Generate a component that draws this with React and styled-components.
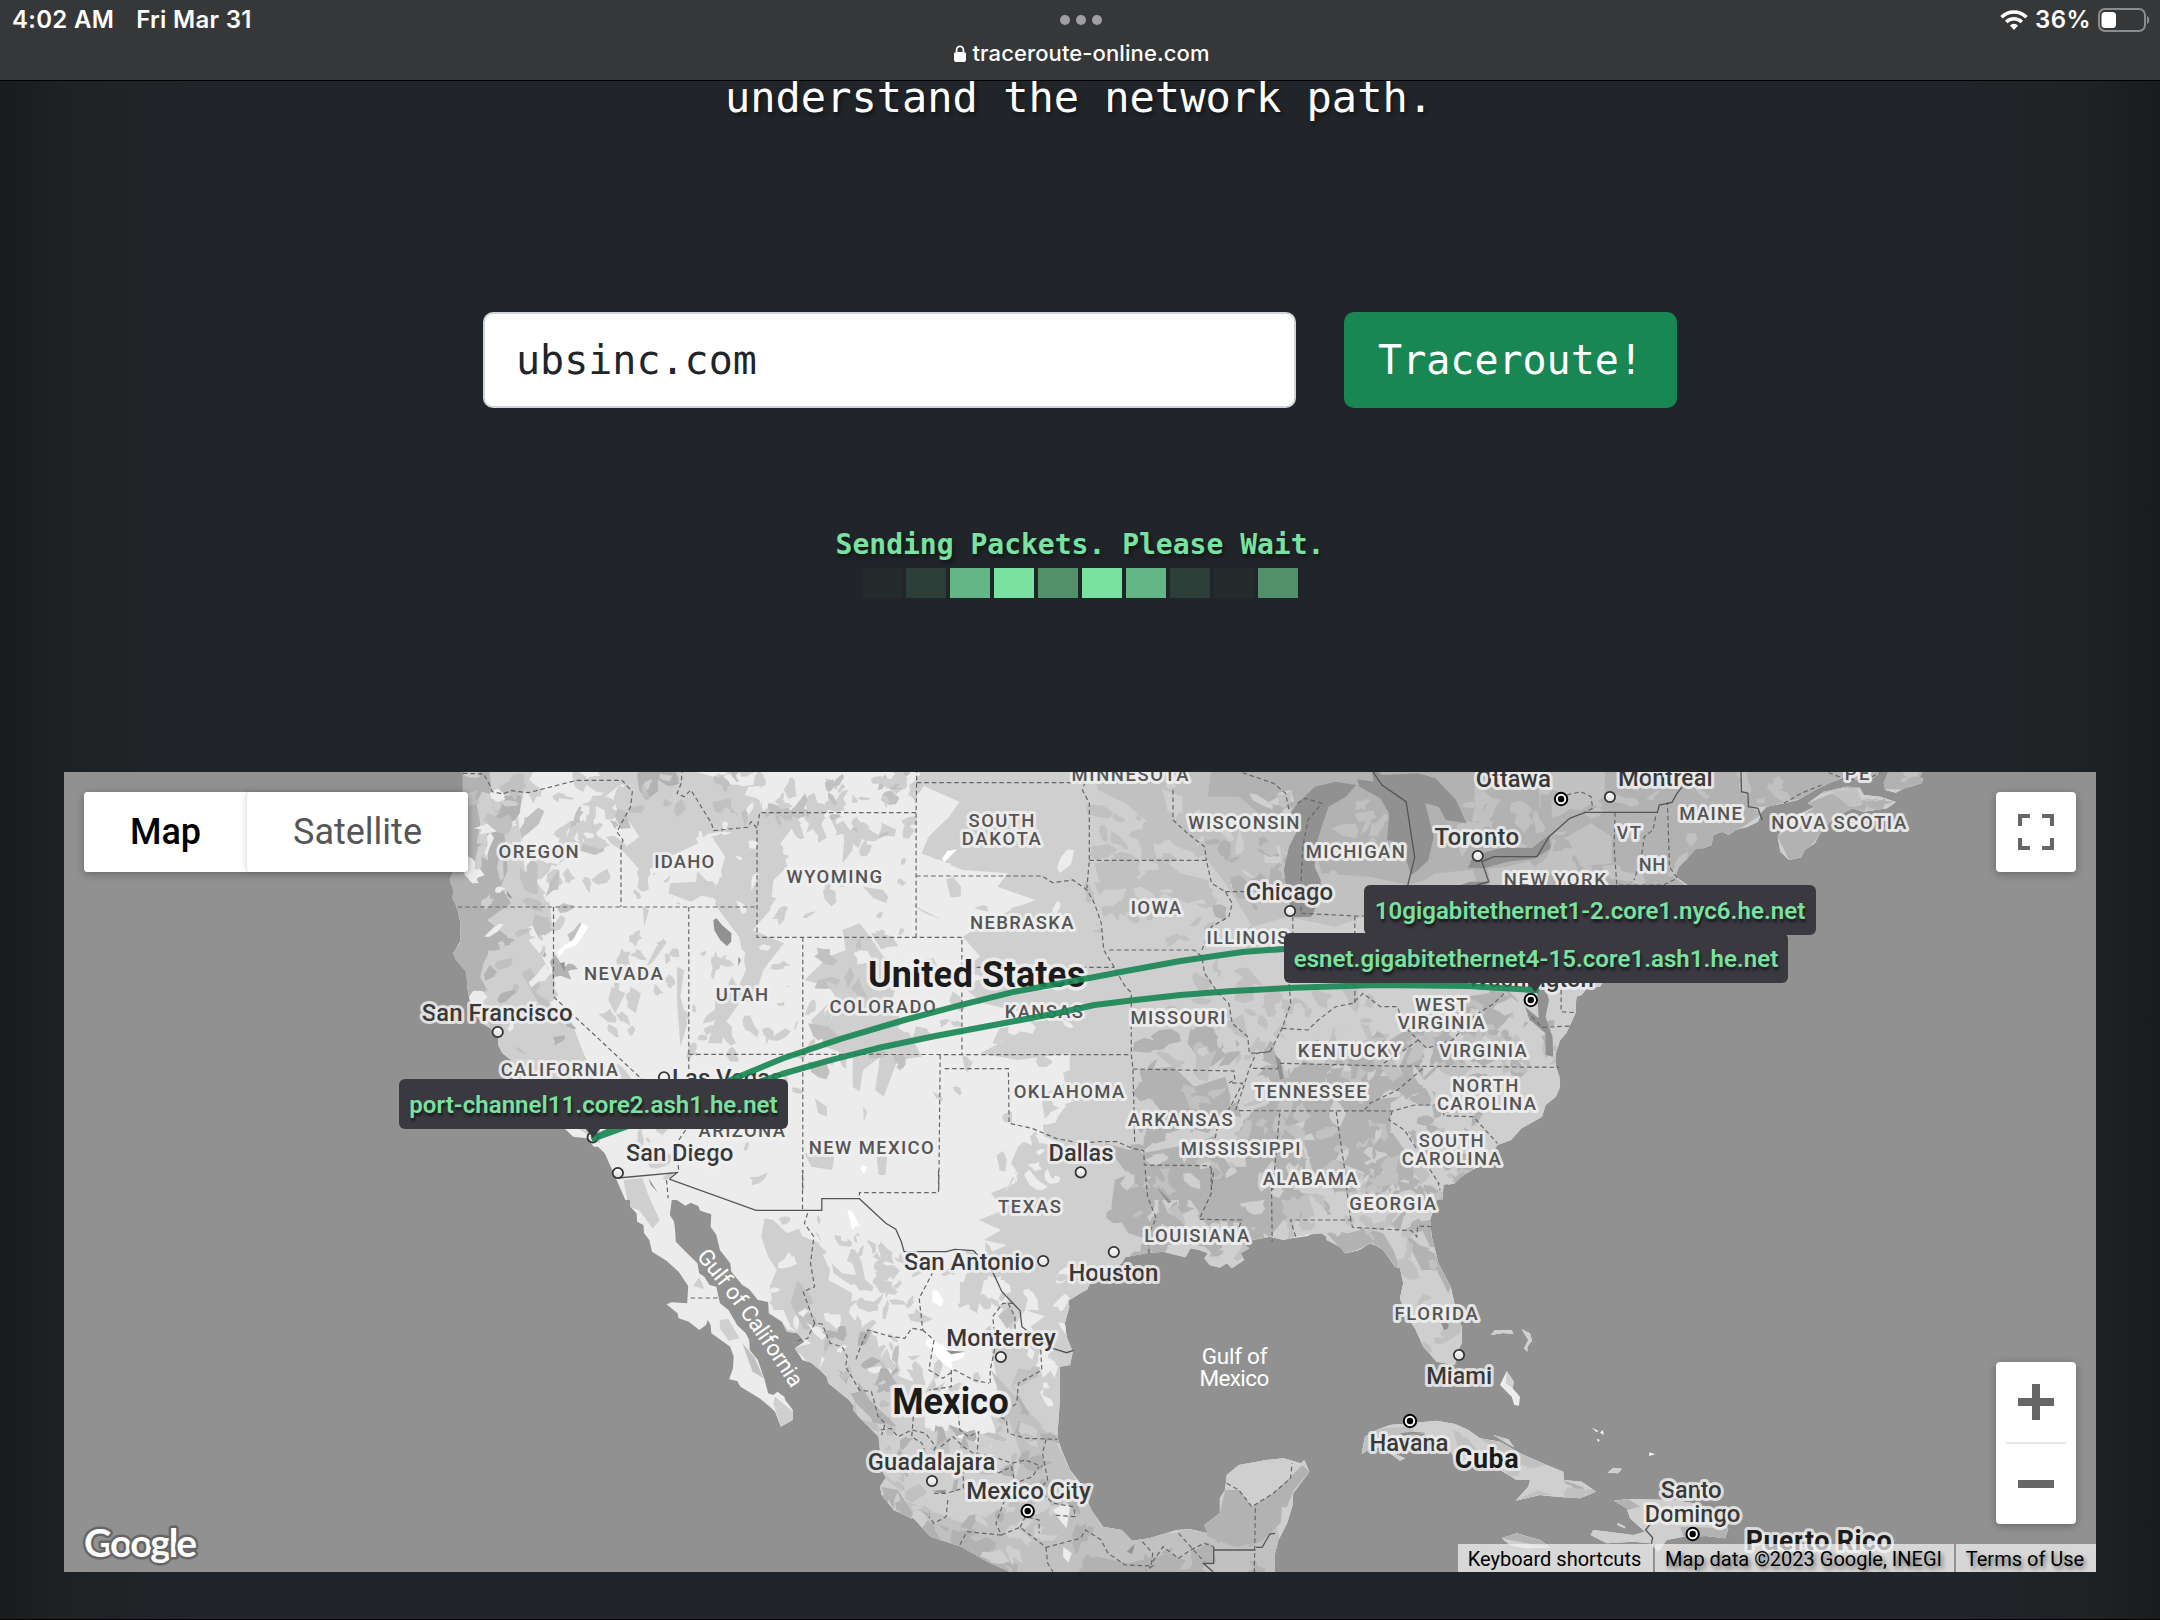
import React from "react";
import styled, { createGlobalStyle, css } from "styled-components";

/* ---------- map geometry ---------- */

// Each sheet is a patch of the map: [left, top, x scale, y scale].
const S = 540 / 1568;
const sheets = {
  A: [60, 770, S, 1 / 3],
  B: [560, 770, S, 1 / 3],
  C: [1060, 770, S, 1 / 3],
  D: [1560, 770, S, 1 / 3],
  E: [360, 1170, S, 1 / 3],
  F: [860, 1170, S, 1 / 3],
  G: [1340, 1170, 1 / 3, 1 / 3],
};

const at = (sheet, x, y) => {
  const [l, t, sx, sy] = sheets[sheet];
  return [l + x * sx, t + y * sy];
};

// "A 10,20 30,40 B 5,6" -> path data; a letter switches the sheet
const trace = (text, closed) => {
  let sheet = "A";
  const pts = [];
  text.trim().split(/\s+/).forEach((tok) => {
    if (sheets[tok]) sheet = tok;
    else {
      const [x, y] = tok.split(",").map(Number);
      pts.push(at(sheet, x, y).map((v) => v.toFixed(1)).join(" "));
    }
  });
  return "M" + pts.join("L") + (closed ? "Z" : "");
};

const land = [
  "A 1170,-10 1170,60 1165,130 1180,200 1140,310 1132,330 1142,360 1140,385 1150,405 1157,430 1163,460 1162,515 1142,550 1150,570 1180,605 1183,655 1190,690 1205,730 1225,760 1250,775 1272,800 1272,825 1285,850 1310,870 1300,900 1320,930 1350,1000 1420,1050 1470,1080 1490,1100 1530,1105 1550,1130 B 110,1130 130,1150 160,1190 168,1225 190,1270 900,1280 900,-10",
  "B 100,-10 1600,-10 1600,1290 190,1290 130,1150 100,1000",
  "C -20,-10 1600,-10 1600,600 1568,650 1530,655 1515,675 1500,680 1498,700 1497,730 1470,790 1452,810 1440,850 1440,890 1450,920 1452,950 1440,980 1410,1005 1400,1040 1340,1075 1310,1110 1270,1125 1240,1175 1180,1210 1130,1245 1115,1225 1110,1290 -20,1290",
  "D -30,-10 527,-10 547,70 547,110 575,120 585,130 575,155 545,170 510,180 490,195 470,185 445,195 440,225 415,235 395,235 370,265 345,290 335,320 370,345 300,420 -30,420",
  "D 520,-10 800,-10 820,25 790,35 740,60 690,90 650,100 600,110 585,127 547,112 527,65",
  "D 960,-10 1060,-10 1045,20 1055,28 1050,40 1000,55 975,68 945,60 940,40",
  "D 765,65 790,60 830,50 870,52 882,75 930,80 975,96 950,115 880,125 850,115 800,140 760,180 740,220 710,240 700,262 665,270 640,245 632,200 650,170 680,140 740,110 720,100",
  "D 790,8 830,28 900,30 930,8",
  "E 745,-20 750,20 770,55 785,80 785,110 803,130 805,155 823,165 825,190 840,210 848,245 890,272 925,305 953,348 950,400 905,397 890,403 922,430 925,445 955,455 985,480 1005,465 1010,450 1018,465 1020,490 1055,515 1075,530 1085,560 1083,595 1072,628 1095,633 1105,650 1160,685 1190,710 1205,725 1222,770 1257,750 1257,720 1235,690 1232,680 1212,665 1200,675 1185,670 1175,630 1155,570 1132,540 1130,510 1120,490 1095,465 1070,420 1045,400 1035,350 1015,345 1000,320 985,310 980,280 950,250 917,215 915,180 912,155 900,135 905,90 920,90 945,107 960,98 982,108 988,122 1020,133 1018,170 1035,195 1045,240 1075,280 1078,305 1110,345 1130,358 1155,390 1185,395 1187,430 1225,455 1240,485 1270,490 1290,515 1262,535 1285,570 1310,578 1335,600 1355,620 1360,640 1420,690 1450,730 1505,790 1510,840 1480,890 1535,910 1510,950 1515,975 1550,1020 1600,1045 1640,1040 1640,-20",
  "F -20,-20 -20,720 0,745 55,800 60,840 50,880 80,930 58,950 75,990 100,1020 155,1045 205,1100 295,1130 370,1175 430,1203 480,1260 1205,1260 1205,1150 1215,1110 1240,1060 1255,1010 1258,970 1305,905 1290,870 1280,880 1230,865 1180,870 1100,885 1065,915 1060,960 1045,985 1045,1030 1000,1065 1010,1090 960,1078 920,1080 840,1105 790,1112 760,1080 705,1070 672,1020 655,980 640,940 610,900 585,840 573,800 580,700 580,590 610,585 618,545 600,500 595,460 608,410 605,392 660,358 668,340 760,280 770,262 830,250 880,245 945,262 960,235 985,240 1010,250 1000,265 1015,285 1045,293 1065,280 1080,295 1115,270 1105,250 1130,235 1110,220 1140,210 1190,200 1230,210 1290,195 1340,190 1385,220 1410,250 1450,240 1480,220 1530,235 1560,290 1640,290 1640,-20",
  "G -40,-30 -40,210 0,230 15,250 50,240 95,218 130,240 165,290 180,295 190,340 180,385 200,440 225,475 250,530 290,575 345,585 352,545 365,520 365,470 350,430 332,350 295,280 275,200 270,150 290,90 310,65 295,45 345,40 380,0 390,-30",
  "G 65,852 75,800 110,780 150,765 210,760 290,752 345,762 385,780 420,805 480,815 540,850 620,885 670,905 672,930 725,935 768,965 720,985 650,980 600,975 527,992 565,950 570,930 530,930 480,900 430,890 350,880 330,840 250,790 200,795 160,850 195,865 180,872 150,850 130,830 85,840",
  "G 822,992 865,987 1000,990 1060,1000 1110,1050 1165,1075 1155,1105 1100,1098 1030,1100 980,1110 955,1145 930,1120 880,1115 800,1120 752,1095 760,1080 880,1095 915,1085 870,1045 860,1015",
  "G 485,1105 530,1090 600,1110 630,1132 560,1135 510,1125",
  "G 803,908 820,893 846,896 835,910",
  "G 500,603 522,635 518,655 540,680 537,707 523,705 515,680 480,645",
  "G 452,495 465,480 515,480 520,492 490,489",
  "G 545,478 570,490 576,512 562,530 562,545 552,535 565,510",
  "G 460,795 505,808 523,832 510,826",
  "G 833,1058 856,1070 855,1075 833,1066",
];

const shades = {
  dark: "#b2b2b2",
  mid: "#c1c1c1",
  soft: "#cfcfcf",
  pale: "#ececec",
  snow: "#ffffff",
  water: "#919191",
};

const areas = [
  // plains, the gulf states and the seaboard
  ["soft", "B 1036,-10 1060,50 1160,95 1130,140 1070,200 1050,250 1110,275 1170,300 1300,310 1270,350 1380,390 1330,410 1290,430 1200,480 1170,500 1220,560 1180,590 1130,620 1230,700 1310,720 1360,730 1330,790 1220,850 1330,870 1480,850 1480,900 1410,930 1400,1000 1410,1060 1330,1130 1310,1180 1330,1210 1290,1270 F 455,0 450,40 380,70 420,120 345,150 410,180 360,210 425,225 290,290 290,400 340,430 360,330 420,330 430,400 400,440 440,480 480,420 540,440 530,470 380,530 400,640 380,740 400,800 360,900 480,950 1640,1230 1640,280 G 1200,1200 1200,-40 D 1100,-10"],
  ["soft", "G -60,-40 400,-40 400,600 100,600 -60,300"],
  ["soft", "G 40,740 1200,740 1200,1180 40,1180"],
  ["soft", "G 430,470 590,470 590,560 430,560"],
  ["soft", "A 1160,-10 1380,-10 1350,60 1330,140 1350,300 1420,380 1430,480 1360,510 1400,560 1440,640 1420,700 1480,740 1520,850 1568,950 1568,1120 1300,930 1200,730 1130,560 1120,300"],
  ["soft", "B 100,-10 340,-10 480,30 560,60 600,90 700,140 640,220 660,290 620,330 610,420 560,480 650,520 590,600 560,700 500,690 540,600 520,500 440,390 480,260 440,200 320,260 240,310 180,240 230,200 180,120"],
  ["soft", "B 820,480 870,460 900,500 940,560 1000,580 960,700 1020,800 1050,860 980,870 940,980 915,960 930,860 880,900 870,965 850,950 850,860 740,820 730,750 800,680 780,650 710,630 780,560 830,540"],
  ["soft", "E 1175,145 1200,150 1240,190 1290,170 1330,190 1350,240 1370,270 1360,330 1430,370 1420,430 1460,480 1500,500 1520,600 1640,650 1640,1060 1480,900 1360,640 1262,535 1310,520 1250,470 1230,420 1200,420 1190,350 1210,300 1185,260 1165,200"],
  ["soft", "F -20,600 60,660 200,780 380,830 420,760 560,760 640,1000 1250,850 1300,1260 400,1260 40,1000"],
  // north and the uplands of the south
  ["mid", "C 90,-10 1600,-10 1600,620 1300,650 1100,500 880,440 800,470 660,440 560,470 480,340 420,260 340,230 190,100 110,60"],
  ["mid", "C 100,280 180,260 230,330 290,260 350,310 430,330 440,380 370,400 300,370 260,420 170,430 130,390"],
  ["dark", "C 440,-10 1600,-10 1600,60 1500,180 1440,250 1300,290 1090,310 1060,330 1010,345 900,320 760,310 700,100 600,150 520,80 430,80"],
  ["dark", "C 380,770 450,750 490,790 530,830 490,850 440,890 400,860 370,820"],
  ["dark", "C 230,900 330,890 390,950 480,920 500,1000 430,1090 330,1060 240,1080 250,980"],
  ["dark", "C 640,900 880,860 1020,770 1180,680 1300,660 1340,700 1280,770 1140,850 1060,930 960,1000 960,1080 1040,1200 900,1290 560,1290 540,1180 520,1060 620,990"],
  ["dark", "C 130,1120 240,1150 440,1110 500,1200 440,1290 250,1290"],
  ["dark", "F 740,30 830,-10 1560,-10 1560,60 1400,130 1230,150 1190,200 1120,160 1000,150 960,90 880,20 830,130 870,220 780,190 730,110"],
  ["dark", "D -60,-10 527,-10 547,110 590,130 430,240 330,320 370,350 300,400 -60,400 -60,120 60,60"],
  ["dark", "D 520,-10 1060,-10 1060,60 820,55 600,110 540,110"],
  ["dark", "D 632,200 740,110 720,100 790,70 850,110 930,90 970,96 800,140 700,262 665,270"],
  ["dark", "G -40,190 60,170 130,190 160,240 180,292 165,290 130,240 95,218 50,240 15,250"],
  ["dark", "G 180,160 275,150 275,200 298,280 332,350 325,370 290,300 245,300 220,250 200,200"],
  ["mid", "D -60,-10 130,-10 130,80 60,120 -60,110"],
  ["dark", "A 1165,-10 1245,-10 1255,80 1340,75 1335,130 1290,190 1300,300 1280,350 1310,400 1240,450 1300,500 1240,540 1220,620 1240,660 1190,690 1120,560 1120,300"],
  ["soft", "A 1210,100 1225,65 1280,80 1275,130 1240,160 1240,225 1210,220 1220,160"],
  ["mid", "A 1340,610 1365,595 1420,690 1435,760 1390,700"],
  ["dark", "B 220,-10 330,-10 350,40 290,60 250,90 230,60"],
  ["mid", "B 720,760 780,770 810,800 770,830 740,810"],
  ["mid", "F 380,600 560,800 620,920 700,1070 900,1090 1210,1070 1250,1260 400,1260 200,1100 60,960 100,980 300,1060 430,1010 470,860"],
  ["dark", "F 440,640 490,730 470,800 450,790 470,720"],
  ["dark", "F 60,950 110,960 160,1040 300,1090 400,1160 440,1210 370,1175 205,1100 100,1020"],
  ["dark", "F 640,1150 780,1180 900,1150 1000,1200 1000,1260 640,1260"],
  ["dark", "F 1060,960 1045,1030 1000,1065 1010,1100 1090,1130 1150,1130 1220,1060 1260,960 1305,905 1285,885 1250,920 1200,970 1138,1010 1100,960"],
  ["mid", "E 1270,330 1310,380 1330,470 1290,480 1250,400"],
  ["dark", "E 1390,600 1450,640 1480,690 1560,770 1500,760 1440,700"],
  ["mid", "G 65,852 75,800 130,775 200,770 230,790 150,830"],
  ["mid", "G 340,780 370,790 420,850 360,860"],
  ["mid", "G 420,805 480,815 620,885 570,895 500,860"],
  ["dark", "G 670,930 768,965 745,972 690,960"],
  ["mid", "G 527,992 590,960 640,975 600,975"],
  ["dark", "G 1020,1070 1165,1075 1155,1105 1030,1100"],
  ["dark", "G 822,992 865,987 900,1010 860,1020"],
  ["dark", "G 485,1105 530,1090 600,1110 630,1132 560,1120"],
];

const details = [
  ["soft", "E 765,30 820,25 835,70 870,150 850,175 810,120 780,110"],
  ["soft", "E 985,322 1000,357 967,348"],
  ["soft", "E 1045,450 1070,447 1102,505 1070,512 1045,475"],
  ["mid", "E 1110,520 1145,560 1172,625 1140,605"],
  ["soft", "E 1205,680 1257,725 1257,750 1222,770 1200,700"],
  ["soft", "E 1425,255 1455,270 1468,335 1425,345 1375,310 1370,280 1400,310 1440,315"],
  ["snow", "E 1415,120 1428,122 1452,170 1438,168 1430,180"],
  ["soft", "B 740,985 775,1010 775,1040 750,1030"],
  ["soft", "B 880,1010 892,1025 882,1055"],
  ["soft", "B 450,660 500,640 520,700 480,760 470,820 430,820 450,750"],
  ["soft", "B 300,505 308,520 270,575 250,590 280,530"],
  ["soft", "B 240,410 258,420 245,470"],
  ["soft", "B 320,340 390,335 440,360 380,395 315,370"],
  ["soft", "B 340,590 360,600 350,680 370,760 350,830 340,700"],
  ["soft", "B 150,650 190,670 160,730 140,690"],
  ["soft", "B 205,650 235,670 220,730 195,710"],
  ["soft", "B 880,350 940,360 950,400 910,385"],
  ["soft", "B 820,150 850,190 850,240 820,280 825,210"],
  ["soft", "B 710,1150 800,1140 790,1200 730,1190"],
  ["soft", "B 920,1160 950,1160 945,1215 925,1215"],
  ["soft", "B 1015,400 1110,450 1060,430"],
  ["pale", "C 0,860 15,940 -60,980 -90,930"],
  ["snow", "A 1515,460 1535,470 1500,525 1465,540 1450,560 1443,545 1465,525 1490,510"],
  ["snow", "B 1125,243 1153,238 1115,278 1110,265"],
  ["snow", "B 878,1185 893,1192 882,1212 873,1198"],
  ["snow", "F 210,360 225,362 243,390 235,410 210,395"],
  ["snow", "F 200,495 225,520 305,550 300,565 265,575 270,600 240,580 190,520"],
  ["snow", "A 1152,530 1160,505 1162,518"],
  ["pale", "F 595,1000 610,1010 600,1075 580,1050 560,1020"],
  ["pale", "F 590,1130 615,1150 605,1178 590,1160"],
  ["pale", "F 550,560 575,590 565,625 550,595"],
  ["pale", "F 490,530 508,545 500,570 485,555"],
  ["soft", "F 1225,1010 1245,1015 1240,1080 1220,1090"],
  ["soft", "F 1090,900 1160,890 1200,900 1160,920 1120,910"],
  ["pale", "E 1340,560 1350,565 1335,595"],
  ["soft", "G 500,603 522,635 520,655 497,640"],
  ["mid", "G 300,490 330,450 365,460 360,490 320,515"],
  ["water", "G 303,458 325,460 325,475 312,480"],
  ["water", "G 180,790 215,785 255,788 245,797 190,797"],
  ["mid", "D 370,190 395,190 398,210 380,230 365,210"],
  ["mid", "D 790,65 860,55 880,100 840,110"],
  ["mid", "D 20,200 90,160 150,200 150,280 60,290"],
  ["soft", "C 1440,700 1495,690 1494,740 1450,800 1430,830"],
  // lakes, bays
  ["water", "C 700,90 740,50 800,35 860,45 830,80 780,110 760,170 740,235 740,290 757,330 757,380 730,440 680,442 660,380 650,300 665,230 690,180 668,130 690,100"],
  ["water", "C 862,28 910,35 905,-10 935,15 1040,10 1090,25 1150,90 1180,160 1120,150 1100,110 1060,100 1085,200 1070,270 1040,300 1020,315 1005,270 1010,225 950,210 955,130 930,85 870,50"],
  ["water", "C 1185,293 1195,268 1240,245 1290,232 1370,235 1420,195 1425,235 1380,265 1300,275 1230,295"],
  ["water", "C 1150,350 1190,335 1245,335 1225,360"],
  ["water", "B 445,450 455,445 470,465 498,490 497,515 485,528 465,510 448,480"],
  ["water", "B 518,560 525,570 518,588"],
  ["water", "C 1385,660 1405,640 1420,690 1410,740 1430,800 1432,860 1410,855 1410,790 1365,750 1350,710 1390,745"],
  ["water", "C 625,855 640,870 650,925 638,930"],
  ["water", "E 838,25 865,68 845,45"],
  ["water", "A 1298,362 1315,388 1300,378"],
  ["water", "A 1452,580 1465,576 1466,605"],
  ["water", "F 210,962 250,960 245,972"],
  ["water", "F 775,1145 798,1122 790,1152"],
  ["water", "F 860,50 905,95 895,100"],
  ["water", "F 250,541 305,545 265,553"],
  ["water", "F 622,385 640,370 662,362 640,385"],
  ["water", "C 1240,100 1225,130 1235,105"],
];

const specks = [
  "G 755,773 775,782 770,787",
  "G 780,788 788,780 792,795",
  "G 770,806 780,810 774,816",
  "G 928,847 946,853 927,858",
  "F 1245,205 1310,192 1300,198 1265,203",
];

const stateLines = [
  "A 1170,10 1230,12 1248,45 1255,65 1285,72 1310,62 1360,68 1500,31 B 180,31 210,65 205,110 165,185 183,210 177,230 177,410",
  "A 1155,411 B 572,411",
  "A 1433,411 1433,680 B 240,930",
  "B 374,411 374,900",
  "B 355,-5 352,40 340,70 360,80 380,60 410,110 440,160 446,182 545,172 555,155 573,175 580,128 1034,128",
  "B 572,180 572,502 1167,502 1167,855",
  "B 1036,-5 1034,128 1034,502",
  "B 1036,38 1530,38",
  "B 1034,318 1400,318 1430,338 1490,330 1530,360 C 100,400 120,460 127,540 158,592 175,625 190,650 207,668 207,853 212,897 217,1120",
  "C 80,15 65,60 85,100 85,270 78,355",
  "B 705,502 705,1260 E 1285,0 1285,121",
  "B 374,853 C 207,854",
  "B 1210,592 C 158,592",
  "B 1104,855 1100,1260 F 228,0 228,68 0,68 E 1450,68 1450,84",
  "B 1117,896 1302,896 1304,1060 1370,1075 1440,1105 C 60,1120 110,1115 165,1115 210,1135 243,1142 245,1185 435,1187 445,1210 440,1260",
  "B 365,1080 345,1110 340,1140 345,1205",
  "C 143,540 390,540 412,560 420,610 460,670 490,700 500,760 545,800 550,850 610,845",
  "C 212,897 505,903 508,930 490,938 530,940 500,1000 455,1080 450,1110",
  "C 85,271 425,271 440,340 480,365 500,400 490,440 440,470 412,540",
  "C 328,60 328,150 370,190 420,230 425,271",
  "C 480,365 590,365",
  "C 530,8 620,40 655,70 665,120",
  "C 690,100 710,85 760,100 720,150 705,230 700,330 700,430 860,438 885,438",
  "C 676,440 676,530 665,640 670,700 645,775 610,845 570,850 550,895 530,960 510,1020",
  "C 856,438 856,700",
  "C 645,775 720,780 750,750 800,710 850,700 880,670 930,710 980,710 1000,770 1040,810 1065,835 1140,810 1200,740 1260,700 1290,670",
  "C 560,895 630,897 640,880 950,888 1450,892",
  "C 520,1022 965,1023 1030,1005 1110,1005 1115,1037 1200,1040 1270,1120",
  "C 885,1020 900,1000 980,960 1060,890",
  "C 940,880 1000,840 1040,810",
  "C 638,1030 618,1260",
  "C 802,1025 828,1210 F 1415,70 1425,150",
  "C 965,1023 955,1050 1000,1080 1050,1160 1100,1240 G 295,40 300,60",
  "C 1370,740 1400,772 1490,768",
  "C 1455,660 1455,725 1500,728",
  "D 160,127 157,230 165,345 300,345 340,325 318,290 312,97",
  "D 278,140 270,180 245,200 235,270 215,330",
  "D 20,75 60,65 90,80 95,115 73,127",
  "D 650,100 700,70 760,45",
  "D 780,8 830,28 890,28 930,8",
  "F 828,0 835,80 860,145 835,200 840,255",
  "F 1020,0 1020,70 985,148 1108,150 1100,175",
  "F 1195,50 1197,215",
  "F 1265,200 1250,150 1425,150 1430,172 1568,180 G 215,182 230,200 233,168 280,170",
  "E 1300,130 1290,160 1318,200 1308,280 1320,350 1287,365 1320,460 1342,462 1365,520 1400,530 1415,560 1410,590 1450,660 1485,665 1505,740 1525,760 1515,795",
  "E 1320,460 1300,505 1272,512",
  "E 1440,568 1450,540 1475,480 F 90,500 130,505 150,475 182,480 172,385 210,310",
  "E 960,384 1040,384",
  "E 890,30 895,85",
  "F 182,480 215,510 200,600 240,625 275,600 330,630 375,640",
  "F 265,600 265,650 200,660",
  "F 445,400 415,400 385,440 395,520 378,600 378,640",
  "F 430,400 450,440 450,490",
  "F 525,540 528,600 460,640 455,700 405,740 425,750 430,790 480,805 573,808",
  "F 285,730 290,780 315,800 345,785 340,850",
  "F 60,780 90,775 110,800 150,780 190,790 220,830 210,850",
  "F 155,740 150,800 180,820 190,850",
  "F 235,830 270,800 300,830 330,850 390,860 440,880 480,870 530,890",
  "F 540,808 530,850 545,930 520,960 560,1000 620,1010 625,1040 560,1035",
  "F 255,990 250,1040 215,1060 200,1040",
  "F 215,970 250,970 300,955 300,900",
  "F 420,990 395,1060 410,1095 310,1085 290,1125",
  "F 410,1095 465,1072 540,1132 640,1105 655,1080 700,1110 720,1150 770,1185 850,1188 830,1200",
  "F 540,1132 545,1180 560,1205",
  "F 465,1072 480,1040 520,1050 520,1090",
  "F 820,1115 850,1150 845,1190",
  "F 850,1175 880,1130 925,1165 960,1140 1000,1120 1027,1130",
  "F 925,1090 960,1130 1000,1175",
  "F 400,910 440,890 450,940 500,920 520,890",
  "F 1065,940 1100,960 1138,1010 1200,970 1250,925 1255,880",
  "F 1148,1015 1145,1210",
];

const countryLines = [
  "B 168,1224 340,1208 320,1225 E 900,28 1150,121 1341,121 1341,86 1450,86 F 75,160 104,178 120,215 128,245 250,245 275,238 330,242 385,305 412,365 465,422 470,470 520,510 560,535 600,548 620,541",
  "C 905,0 935,45 1005,95 1030,262 1010,345",
  "C 1210,345 1245,335 1225,275 1260,260 1385,260 1420,200 1480,145 1525,127 D 73,127 283,127 288,105 325,97 340,70 355,50",
  "D 525,-5 527,65 546,70 547,110 575,115 587,150",
  "F 1027,1130 1027,1180 997,1180 1025,1205",
  "F 1027,1140 1148,1140",
  "F 1150,1132 1168,1132 1190,1092 1205,1090",
  "G 932,1060 917,1080 938,1103 934,1122",
];

// [sheet, left, top, right, bottom, count, size, shades]
const relief = [
  ["A", 1160, 0, 1568, 400, 50, 9, ["soft", "pale", "soft", "mid"]],
  ["A", 1180, 400, 1500, 1100, 50, 8, ["soft", "dark", "mid", "pale"]],
  ["B", 0, 0, 1035, 200, 140, 9, ["soft", "soft", "pale", "mid", "soft"]],
  ["B", 0, 200, 640, 420, 30, 8, ["soft", "pale"]],
  ["B", 560, 150, 1035, 500, 22, 7, ["soft"]],
  ["B", 130, 500, 420, 820, 20, 6, ["soft"]],
  ["B", 380, 500, 720, 850, 28, 8, ["soft", "soft", "pale"]],
  ["B", 720, 500, 1040, 900, 36, 8, ["soft", "mid", "pale"]],
  ["B", 150, 850, 700, 1240, 20, 8, ["soft"]],
  ["B", 1040, 250, 1480, 980, 34, 8, ["soft", "soft", "pale"]],
  ["B", 1280, 950, 1450, 1250, 14, 9, ["pale", "soft"]],
  ["C", 80, 30, 440, 480, 55, 10, ["soft", "mid", "mid"]],
  ["C", 440, 80, 700, 440, 38, 9, ["soft", "dark", "mid"]],
  ["C", 760, 100, 1010, 330, 12, 8, ["mid"]],
  ["C", 1080, 60, 1560, 340, 26, 12, ["mid", "mid", "dark"]],
  ["C", 280, 500, 900, 860, 64, 9, ["soft", "mid", "mid"]],
  ["C", 220, 760, 640, 1240, 75, 10, ["soft", "dark", "mid"]],
  ["C", 600, 800, 1250, 1100, 110, 10, ["soft", "dark", "mid", "dark"]],
  ["C", 640, 1080, 1200, 1260, 65, 10, ["soft", "mid", "dark"]],
  ["C", 1040, 640, 1440, 900, 60, 9, ["soft", "mid", "dark"]],
  ["D", 0, 0, 540, 340, 30, 10, ["mid", "mid", "dark"]],
  ["D", 560, 0, 1050, 120, 20, 8, ["mid", "dark"]],
  ["E", 1180, 150, 1560, 600, 50, 8, ["soft", "pale", "soft"]],
  ["E", 1300, 460, 1560, 900, 50, 8, ["soft", "mid", "dark"]],
  ["F", 60, 260, 600, 700, 65, 9, ["soft", "pale", "soft"]],
  ["F", 380, 400, 570, 900, 24, 9, ["mid", "soft"]],
  ["F", 50, 780, 620, 1200, 100, 9, ["soft", "mid", "dark", "soft"]],
  ["F", 600, 1080, 1200, 1210, 26, 11, ["mid", "dark"]],
  ["F", 740, 0, 1200, 290, 60, 10, ["soft", "mid", "dark", "dark"]],
  ["F", 1200, 0, 1560, 200, 45, 9, ["soft", "mid"]],
  ["G", 0, -20, 300, 200, 40, 9, ["soft", "mid", "dark"]],
  ["G", 140, 180, 350, 560, 18, 8, ["soft", "mid"]],
  ["G", 340, 780, 760, 990, 14, 8, ["mid", "soft"]],
];

const makeRandom = (seed) => () => {
  seed = (seed * 1664525 + 1013904223) % 4294967296;
  return seed / 4294967296;
};

const shards = (() => {
  const rnd = makeRandom(77);
  const out = [];
  relief.forEach(([sheet, l, t, r, b, count, size, tones]) => {
    for (let i = 0; i < count; i += 1) {
      const [cx, cy] = at(sheet, l + rnd() * (r - l), t + rnd() * (b - t));
      const tilt = rnd() * Math.PI;
      const long = size * (0.6 + rnd() * 1.1);
      const wide = long * (0.3 + rnd() * 0.45);
      const n = 6 + Math.floor(rnd() * 5);
      const pts = [];
      for (let k = 0; k < n; k += 1) {
        const a = (k / n) * Math.PI * 2;
        const q = 0.45 + rnd() * 0.85;
        const x = Math.cos(a) * long * q;
        const y = Math.sin(a) * wide * q;
        pts.push(
          (cx + x * Math.cos(tilt) - y * Math.sin(tilt)).toFixed(1) + " " +
          (cy + x * Math.sin(tilt) + y * Math.cos(tilt)).toFixed(1)
        );
      }
      out.push({ d: "M" + pts.join("L") + "Z", tone: shades[tones[Math.floor(rnd() * tones.length)]] });
    }
  });
  return out;
})();

// [kind, text, sheet, left, right, baseline]
const labels = [
  ["state", "OREGON", "A", 1277, 1508, 262],
  ["state", "CALIFORNIA", "A", 1283, 1622, 915],
  ["city", "San Francisco", "A", 1054, 1490, 751],
  ["state", "IDAHO", "B", 277, 450, 292],
  ["state", "WYOMING", "B", 661, 937, 337],
  ["state", "SOUTH", "B", 1190, 1379, 168],
  ["state", "DAKOTA", "B", 1170, 1398, 223],
  ["state", "NEBRASKA", "B", 1194, 1493, 474],
  ["state", "NEVADA", "B", 73, 300, 628],
  ["state", "UTAH", "B", 456, 606, 690],
  ["state", "COLORADO", "B", 786, 1093, 727],
  ["state", "KANSAS", "B", 1295, 1520, 741],
  ["state", "ARIZONA", "B", 406, 655, 1099],
  ["state", "NEW MEXICO", "B", 726, 1087, 1150],
  ["state", "OKLAHOMA", "B", 1321, 1640, 982],
  ["city", "Las Vegas", "B", 329, 648, 947],
  ["city", "San Diego", "B", 195, 505, 1172],
  ["city", "Dallas", "B", 1422, 1609, 1170],
  ["country", "United States", "B", 898, 1527, 648],
  ["state", "MINNESOTA", "C", 37, 375, 31],
  ["state", "WISCONSIN", "C", 376, 697, 174],
  ["state", "MICHIGAN", "C", 717, 1003, 262],
  ["state", "IOWA", "C", 209, 353, 430],
  ["state", "ILLINOIS", "C", 429, 665, 519],
  ["state", "MISSOURI", "C", 208, 482, 760],
  ["state", "ARKANSAS", "C", 200, 503, 1066],
  ["state", "MISSISSIPPI", "C", 354, 700, 1153],
  ["state", "ALABAMA", "C", 592, 866, 1243],
  ["state", "TENNESSEE", "C", 566, 892, 981],
  ["state", "KENTUCKY", "C", 694, 993, 858],
  ["state", "VIRGINIA", "C", 1105, 1357, 858],
  ["state", "WEST", "C", 1034, 1185, 720],
  ["state", "VIRGINIA", "C", 984, 1235, 775],
  ["state", "NORTH", "C", 1142, 1333, 963],
  ["state", "CAROLINA", "C", 1098, 1384, 1018],
  ["state", "SOUTH", "C", 1045, 1232, 1129],
  ["state", "CAROLINA", "C", 996, 1282, 1183],
  ["state", "NEW YORK", "C", 1292, 1587, 345],
  ["city", "Ottawa", "C", 1211, 1427, 48],
  ["city", "Toronto", "C", 1091, 1335, 222],
  ["city", "Chicago", "C", 543, 795, 388],
  ["city", "Washington", "C", 1187, 1552, 650],
  ["state", "VT", "D", 168, 237, 205],
  ["state", "MAINE", "D", 350, 530, 148],
  ["state", "NOVA SCOTIA", "D", 617, 1007, 175],
  ["state", "NH", "D", 232, 308, 300],
  ["state", "PE", "D", 830, 900, 28],
  ["city", "Montreal", "D", 172, 445, 46],
  ["state", "TEXAS", "F", 404, 585, 127],
  ["state", "LOUISIANA", "F", 829, 1132, 213],
  ["city", "San Antonio", "F", 131, 507, 298],
  ["city", "Houston", "F", 609, 868, 331],
  ["city", "Monterrey", "F", 254, 570, 525],
  ["city", "Guadalajara", "F", 26, 395, 898],
  ["city", "Mexico City", "F", 312, 672, 985],
  ["country", "Mexico", "F", 97, 434, 730],
  ["sea", "Gulf of", "F", 996, 1185, 580],
  ["sea", "Mexico", "F", 989, 1190, 645],
  ["state", "GEORGIA", "G", 31, 290, 118],
  ["state", "FLORIDA", "G", 167, 415, 447],
  ["city", "Miami", "G", 262, 458, 640],
  ["city", "Havana", "G", 92, 327, 842],
  ["island", "Cuba", "G", 348, 538, 892],
  ["city", "Santo", "G", 966, 1147, 982],
  ["city", "Domingo", "G", 918, 1203, 1055],
  ["island", "Puerto Rico", "G", 1221, 1657, 1137],
];

const towns = [
  ["A", 1271, 786], ["B", 168, 1209], ["B", 1512, 1207], ["B", 302, 922], ["B", 95, 1102],
  ["C", 668, 423], ["C", 1213, 258], ["D", 145, 81], ["F", 532, 273], ["F", 737, 246],
  ["F", 409, 561], ["F", 209, 933], ["G", 357, 555],
];

const capitals = [["C", 1455, 87], ["C", 1367, 690], ["F", 487, 1023], ["G", 210, 753], ["G", 1058, 1092]];

const routes = [
  "B 92,1108 180,1066 490,932 650,864 820,805 1000,750 1160,706 1320,665 1568,618 C 180,605 350,573 530,546 650,537 900,515 1200,505",
  "B 92,1108 180,1075 645,912 780,872 920,835 1090,798 1260,765 1450,728 C 100,705 200,692 350,675 500,663 680,653 920,645 1180,648 1390,661",
];

/* ---------- styles ---------- */

const mono = '"DejaVu Sans Mono", "Liberation Mono", monospace';
const roboto = 'Roboto, "Liberation Sans", sans-serif';

const GlobalStyle = createGlobalStyle`
  *, *::before, *::after { box-sizing: border-box; }
  body { margin: 0; background: #212529; }
`;

const Page = styled.div`
  width: 2160px;
  height: 1620px;
  display: flex;
  flex-direction: column;
  overflow: hidden;
  background: #212529;
  border-bottom: 1px solid #000;
`;

const BrowserBar = styled.header`
  flex: none;
  height: 81px;
  background: #363739;
  border-bottom: 1px solid #000;
  color: #fff;
  font-family: Inter, "Liberation Sans", sans-serif;
`;

const StatusRow = styled.div`
  display: grid;
  grid-template-columns: 1fr auto 1fr;
  align-items: center;
  height: 40px;
  padding: 0 10px 0 12px;
  font-size: 24px;
  font-weight: 600;
  line-height: 40px;
`;

const Clock = styled.div`
  display: flex;
  gap: 22px;
  letter-spacing: 0.3px;
`;

const Dots = styled.div`
  display: flex;
  gap: 6px;
`;

const Dot = styled.span`
  width: 10px;
  height: 10px;
  border-radius: 50%;
  background: #a0a0a2;
`;

const Indicators = styled.div`
  display: flex;
  align-items: center;
  justify-content: flex-end;
  gap: 7px;
  letter-spacing: 0.4px;
`;

const Address = styled.div`
  display: flex;
  justify-content: center;
  align-items: center;
  gap: 6px;
  height: 26px;
  padding-left: 4px;
  font-size: 22px;
  font-weight: 500;
  line-height: 26px;
  letter-spacing: 0.1px;
`;

const Content = styled.main`
  flex: 1;
  min-height: 0;
  overflow: hidden;
  display: flex;
  flex-direction: column;
  align-items: center;
  font-family: ${mono};
  background: linear-gradient(90deg, #181c1e 0, #1e2225 70px, #212529 190px, #212529 1970px, #1e2225 2090px, #181c1e 100%);
`;

const Intro = styled.p`
  margin: -8px 2px 0 0;
  color: #fff;
  font-size: 42px;
  line-height: 50px;
  white-space: pre;
  text-shadow: 2px 3px 4px rgba(0, 0, 0, 0.45);
`;

const SearchForm = styled.form`
  display: flex;
  gap: 48px;
  margin: 189px 0 0;
`;

const HostInput = styled.input`
  width: 813px;
  height: 96px;
  padding: 0 31px;
  border: 2px solid #ced4da;
  border-radius: 10px;
  background: #fff;
  color: #212529;
  font: 40px/60px ${mono};
  outline: none;
`;

const SubmitButton = styled.button`
  width: 333px;
  height: 96px;
  padding: 0;
  border: 0;
  border-radius: 10px;
  background: #198754;
  color: #fff;
  font: 40px/60px ${mono};
`;

const Progress = styled.section`
  display: flex;
  flex-direction: column;
  align-items: center;
  margin-top: 121px;
`;

const ProgressText = styled.p`
  margin: 0;
  color: #79e2a0;
  font-size: 28px;
  font-weight: 700;
  line-height: 32px;
  text-shadow: 2px 3px 4px rgba(0, 0, 0, 0.45);
`;

const Packets = styled.div`
  display: flex;
  gap: 4px;
  margin-top: 7px;
`;

const Packet = styled.span`
  width: 40px;
  height: 30px;
  background: ${(p) => p.$tone};
`;

const MapFrame = styled.section`
  position: relative;
  flex: none;
  width: 2032px;
  height: 800px;
  margin-top: 174px;
  overflow: hidden;
  background: #919191;
  font-family: ${roboto};
`;

const Chart = styled.svg`
  display: block;
  width: 2032px;
  height: 800px;
`;

const labelKinds = {
  state: css`font-size: 18.5px; font-weight: 500; fill: #555; stroke: rgba(240, 240, 240, 0.88); stroke-width: 6px;`,
  city: css`font-size: 24px; font-weight: 500; fill: #383838; stroke: rgba(240, 240, 240, 0.82); stroke-width: 6px;`,
  country: css`font-size: 36px; font-weight: 700; fill: #1b1b1b; stroke: rgba(240, 240, 240, 0.85); stroke-width: 7px;`,
  island: css`font-size: 27px; font-weight: 700; fill: #1b1b1b; stroke: rgba(240, 240, 240, 0.8); stroke-width: 6px;`,
  sea: css`font-size: 22.5px; font-weight: 400; fill: #fff; stroke: none;`,
};

const Label = styled.text`
  font-family: ${roboto};
  paint-order: stroke;
  stroke-linejoin: round;
  ${(p) => labelKinds[p.$kind]}
`;

const Logo = styled.text`
  font-family: Lato, "Open Sans", sans-serif;
  font-size: 39px;
  font-weight: 700;
  fill: #fff;
  stroke: #666;
  stroke-width: 5px;
  stroke-linejoin: round;
  paint-order: stroke;
`;

const controlCard = css`
  position: absolute;
  background: #fff;
  border-radius: 4px;
  box-shadow: 0 2px 8px rgba(0, 0, 0, 0.3);
`;

const TypeSwitch = styled.div`
  ${controlCard}
  top: 20px;
  left: 20px;
  display: flex;
  height: 80px;
`;

const TypeButton = styled.button`
  width: ${(p) => (p.$active ? 163 : 221)}px;
  padding: 0;
  border: 0;
  border-radius: 4px;
  background: #fff;
  box-shadow: ${(p) => (p.$active ? "none" : "-1px 0 5px rgba(0, 0, 0, 0.16)")};
  color: ${(p) => (p.$active ? "#000" : "#565656")};
  font: ${(p) => (p.$active ? 500 : 400)} 36px/80px ${roboto};
`;

const FullscreenButton = styled.button`
  ${controlCard}
  top: 20px;
  right: 20px;
  display: grid;
  place-items: center;
  width: 80px;
  height: 80px;
  padding: 0;
  border: 0;
`;

const ZoomControl = styled.div`
  ${controlCard}
  right: 20px;
  bottom: 48px;
  display: flex;
  flex-direction: column;
  align-items: center;
  width: 80px;
`;

const ZoomButton = styled.button`
  display: grid;
  place-items: center;
  width: 80px;
  height: 80px;
  padding: 0;
  border: 0;
  background: none;
`;

const ZoomRule = styled.span`
  width: 60px;
  height: 2px;
  background: #e6e6e6;
`;

const Credits = styled.div`
  position: absolute;
  right: 0;
  bottom: 0;
  display: flex;
  gap: 2px;
  height: 28px;
  color: #000;
  font-size: 20px;
  line-height: 30px;
  white-space: pre;
`;

const Credit = styled.span`
  width: ${(p) => p.$width}px;
  padding-right: 2px;
  text-align: center;
  background: rgba(245, 245, 245, 0.7);
  text-shadow: ${(p) => (p.$shadow ? "2px 3px 4px rgba(0, 0, 0, 0.55)" : "none")};
`;

const HopLabel = styled.div`
  position: absolute;
  left: ${(p) => p.$x}px;
  top: ${(p) => p.$y}px;
  width: ${(p) => p.$width}px;
  height: 50px;
  border-radius: 6px;
  background: #39393f;
  color: #79e2a0;
  font-size: 24px;
  font-weight: 600;
  letter-spacing: 0.05px;
  line-height: 52px;
  text-align: center;
  white-space: nowrap;
  text-shadow: 1px 3px 3px rgba(0, 0, 0, 0.6);

  &::after {
    content: ${(p) => (p.$tip ? '""' : "none")};
    position: absolute;
    left: ${(p) => p.$tip - 7}px;
    top: 100%;
    border: 7px solid transparent;
    border-top: 9px solid #39393f;
    border-bottom: 0;
  }
`;

/* ---------- pieces ---------- */

const LockIcon = () => (
  <svg width="12" height="17" viewBox="0 0 12 17">
    <rect x="0" y="7" width="12" height="10" rx="2" fill="#fff" />
    <path d="M2.6 8V4.8a3.4 3.4 0 0 1 6.8 0V8" fill="none" stroke="#fff" strokeWidth="1.7" />
  </svg>
);

const WifiIcon = () => (
  <svg width="28" height="20" viewBox="0 0 28 20">
    <g fill="none" stroke="#fff" strokeWidth="3.6">
      <path d="M1.5 7.2a17.6 17.6 0 0 1 25 0" />
      <path d="M6.2 12a11 11 0 0 1 15.6 0" />
    </g>
    <path d="M9.9 15.5a5.9 5.9 0 0 1 8.2 0L14 20Z" fill="#fff" />
  </svg>
);

const BatteryIcon = () => (
  <svg width="52" height="24" viewBox="0 0 52 24">
    <rect x="1" y="1" width="46" height="22" rx="6" fill="none" stroke="#8b8c8d" strokeWidth="2" />
    <path d="M49 8c3 1 3 7 0 8Z" fill="#8b8c8d" />
    <rect x="3.5" y="4" width="14.5" height="16" rx="3.5" fill="#fff" />
  </svg>
);

const FullscreenIcon = () => (
  <svg width="36" height="36" viewBox="0 0 36 36">
    <path d="M2 12V2H12M24 2H34V12M34 24V34H24M12 34H2V24" fill="none" stroke="#666" strokeWidth="4" />
  </svg>
);

const SignIcon = ({ plus }) => (
  <svg width="36" height="36" viewBox="0 0 36 36">
    <path d={plus ? "M0 18H36M18 0V36" : "M0 18H36"} stroke="#666" strokeWidth="8" />
  </svg>
);

const MapLabel = ({ kind, text, sheet, left, right, base }) => {
  const [x, y] = at(sheet, left, base);
  const [end] = at(sheet, right, base);
  return (
    <Label $kind={kind} x={x - 1.2} y={y + 0.6} textLength={end - x + 0.6}>
      {text}
    </Label>
  );
};

const MapDrawing = () => (
  <Chart viewBox="64 772 2032 800">
    <defs>
      <clipPath id="land">
        {land.map((d, i) => <path key={i} d={trace(d, true)} />)}
      </clipPath>
      <path id="gulf" d="M696 1257Q744 1314 793 1391" />
      <linearGradient id="dot" x1="0" y1="0" x2="0" y2="1">
        <stop offset="0" stopColor="#fff" />
        <stop offset="1" stopColor="#ddd" />
      </linearGradient>
    </defs>
    <g clipPath="url(#land)">
      <rect x="64" y="772" width="2032" height="800" fill={shades.pale} />
      {areas.map(([tone, d], i) => <path key={i} d={trace(d, true)} fill={shades[tone]} />)}
      {shards.map((s, i) => <path key={i} d={s.d} fill={s.tone} />)}
      {details.map(([tone, d], i) => <path key={i} d={trace(d, true)} fill={shades[tone]} />)}
    </g>
    {specks.map((d, i) => <path key={i} d={trace(d, true)} fill="#f4f4f4" />)}
    <g fill="none" stroke="#666" strokeWidth="1.2" strokeDasharray="4.5 3">
      {stateLines.map((d, i) => <path key={i} d={trace(d)} />)}
    </g>
    <g fill="none" stroke="#555" strokeWidth="1.3">
      {countryLines.map((d, i) => <path key={i} d={trace(d)} />)}
    </g>
    {labels.map(([kind, text, sheet, left, right, base], i) => (
      <MapLabel key={i} {...{ kind, text, sheet, left, right, base }} />
    ))}
    <Label $kind="sea">
      <textPath href="#gulf" textLength="163">Gulf of California</textPath>
    </Label>
    {towns.map(([sheet, px, py], i) => {
      const [x, y] = at(sheet, px, py);
      return <circle key={i} cx={x} cy={y} r="5.2" fill="url(#dot)" stroke="#333" strokeWidth="1.8" />;
    })}
    {capitals.map(([sheet, px, py], i) => {
      const [x, y] = at(sheet, px, py);
      return (
        <g key={i}>
          <circle cx={x} cy={y} r="6.2" fill="#fff" stroke="#000" strokeWidth="2" />
          <circle cx={x} cy={y} r="3.2" fill="#000" />
        </g>
      );
    })}
    <g fill="none" stroke="#198754" strokeWidth="6" strokeLinejoin="round" opacity="0.91">
      {routes.map((d, i) => <path key={i} d={trace(d)} />)}
    </g>
    <Logo x="84" y="1557" textLength="113">Google</Logo>
  </Chart>
);

const packets = ["#232b2c", "#2c3e38", "#65b686", "#79e2a0", "#52906c", "#79e2a0", "#65b686", "#2c3e38", "#232b2c", "#52906c"];

export default function App() {
  return (
    <Page>
      <GlobalStyle />
      <BrowserBar>
        <StatusRow>
          <Clock>
            <span>4:02 AM</span>
            <span>Fri Mar 31</span>
          </Clock>
          <Dots>
            <Dot />
            <Dot />
            <Dot />
          </Dots>
          <Indicators>
            <WifiIcon />
            <span>36%</span>
            <BatteryIcon />
          </Indicators>
        </StatusRow>
        <Address>
          <LockIcon />
          <span>traceroute-online.com</span>
        </Address>
      </BrowserBar>
      <Content>
        <Intro>understand the network path.</Intro>
        <SearchForm onSubmit={(e) => e.preventDefault()}>
          <HostInput defaultValue="ubsinc.com" />
          <SubmitButton>Traceroute!</SubmitButton>
        </SearchForm>
        <Progress>
          <ProgressText>Sending Packets. Please Wait.</ProgressText>
          <Packets>
            {packets.map((tone, i) => <Packet key={i} $tone={tone} />)}
          </Packets>
        </Progress>
        <MapFrame>
          <MapDrawing />
          <HopLabel $x={1300} $y={113} $width={452}>10gigabitethernet1-2.core1.nyc6.he.net</HopLabel>
          <HopLabel $x={1220} $y={161} $width={504} $tip={251}>esnet.gigabitethernet4-15.core1.ash1.he.net</HopLabel>
          <HopLabel $x={335} $y={307} $width={389} $tip={194}>port-channel11.core2.ash1.he.net</HopLabel>
          <TypeSwitch>
            <TypeButton $active>Map</TypeButton>
            <TypeButton>Satellite</TypeButton>
          </TypeSwitch>
          <FullscreenButton>
            <FullscreenIcon />
          </FullscreenButton>
          <ZoomControl>
            <ZoomButton>
              <SignIcon plus />
            </ZoomButton>
            <ZoomRule />
            <ZoomButton>
              <SignIcon />
            </ZoomButton>
          </ZoomControl>
          <Credits>
            <Credit $width={195}>Keyboard shortcuts</Credit>
            <Credit $width={299} $shadow>Map data ©2023 Google, INEGI</Credit>
            <Credit $width={140} $shadow>Terms of Use</Credit>
          </Credits>
        </MapFrame>
      </Content>
    </Page>
  );
}
